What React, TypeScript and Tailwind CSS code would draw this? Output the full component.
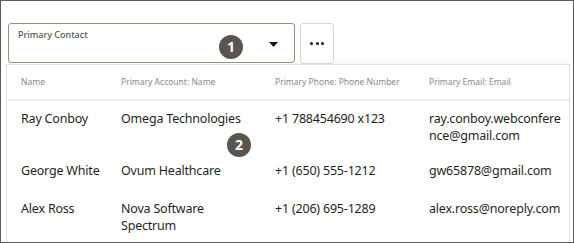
import React from "react";

type Contact = {
  name: string;
  account: string[];
  phone: string;
  email: string[];
  h: string;
};

const ROWS: Contact[] = [
  {
    name: "Ray Conboy",
    account: ["Omega Technologies"],
    phone: "+1 788454690 x123",
    email: ["ray.conboy.webconfere", "nce@gmail.com"],
    h: "h-[52px]",
  },
  {
    name: "George White",
    account: ["Ovum Healthcare"],
    phone: "+1 (650) 555-1212",
    email: ["gw65878@gmail.com"],
    h: "h-[38px]",
  },
  {
    name: "Alex Ross",
    account: ["Nova Software", "Spectrum"],
    phone: "+1 (206) 695-1289",
    email: ["alex.ross@noreply.com"],
    h: "h-[50px]",
  },
];

function Badge({ n }: { n: number }) {
  return (
    <div className="absolute flex h-[24px] w-[24px] items-center justify-center rounded-full bg-[#5b5550] text-[14px] font-bold leading-none text-white">
      {n}
    </div>
  );
}

export default function App() {
  return (
    <div
      className="relative h-[243px] w-[574px] overflow-hidden border border-[#5a5a5a] bg-white"
      style={{ fontFamily: '"Noto Sans", "Open Sans", sans-serif' }}
    >
      {/* 입력 + 메뉴 버튼 */}
      <div className="flex gap-[5px] pl-[7px] pt-[22px]">
        <div className="relative h-[40px] w-[287px] rounded-[3px] border border-[#869a78] bg-white">
          <div className="pl-[9px] pt-[4px] text-[9px] font-medium text-[#4e5a4a]">
            Primary Contact
          </div>
          <svg
            className="absolute right-[16px] top-[18px]"
            width="9"
            height="5"
            viewBox="0 0 9 5"
          >
            <path d="M0 0 H9 L4.5 5 Z" fill="#161513" />
          </svg>
        </div>
        <div className="flex h-[41px] w-[34px] items-center justify-center rounded-[3px] border border-[#d4d4d4] bg-white">
          <div className="flex gap-[2.5px]">
            <span className="h-[3px] w-[3px] rounded-full bg-[#161513]" />
            <span className="h-[3px] w-[3px] rounded-full bg-[#161513]" />
            <span className="h-[3px] w-[3px] rounded-full bg-[#161513]" />
          </div>
        </div>
      </div>

      {/* 드롭다운 목록 */}
      <div className="ml-[5px] mr-[3px] h-[180px] border-x border-b border-t border-[#e3e3e3] shadow-[0_-3px_6px_rgba(0,0,0,0.03)]">
        <div className="grid h-[36px] grid-cols-[100px_154px_154px_1fr] items-center border-b-2 border-[#f0f0f0] pl-[14px] text-[8.5px] text-[#8a8a8a]">
          <span>Name</span>
          <span>Primary Account: Name</span>
          <span>Primary Phone: Phone Number</span>
          <span>Primary Email: Email</span>
        </div>
        {ROWS.map((r) => (
          <div
            key={r.name}
            className={`grid ${r.h} grid-cols-[100px_154px_154px_1fr] pl-[14px] pt-[9px] text-[12.5px] leading-[17px] tracking-[-0.2px] text-[#1f1f1f]`}
          >
            <span>{r.name}</span>
            <span>
              {r.account.map((l) => (
                <div key={l}>{l}</div>
              ))}
            </span>
            <span>{r.phone}</span>
            <span>
              {r.email.map((l) => (
                <div key={l}>{l}</div>
              ))}
            </span>
          </div>
        ))}
      </div>

      {/* 번호 배지 */}
      <div className="absolute left-[218px] top-[34px]">
        <Badge n={1} />
      </div>
      <div className="absolute left-[226px] top-[132px]">
        <Badge n={2} />
      </div>
    </div>
  );
}
